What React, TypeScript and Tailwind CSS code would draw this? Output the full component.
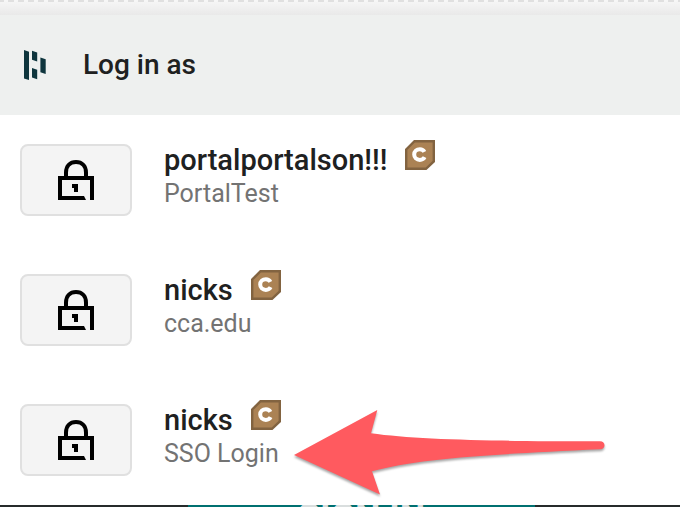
import type { ReactNode } from "react";

type Account = {
  username: string;
  detail: string;
};

const ACCOUNTS: Account[] = [
  { username: "portalportalson!!!", detail: "PortalTest" },
  { username: "nicks", detail: "cca.edu" },
  { username: "nicks", detail: "SSO Login" },
];

function BrandLogo() {
  return (
    <svg viewBox="0 0 24 30" className="h-[30px] w-6" fill="#0e353d" aria-hidden="true">
      <path d="M1 0 6 1.7V30L1 28.4Z" />
      <path d="M9 .7 14.2 2.4V11.5L9 9.8Z" />
      <path d="M9 18 14.2 19.7V29.3L9 27.6Z" />
      <path d="M17.4 7.6 22.7 9.3V24L17.4 22.3Z" />
    </svg>
  );
}

function LockIcon() {
  return (
    <svg viewBox="0 0 36 41" className="h-[41px] w-9" aria-hidden="true">
      <path d="M8 17V12.5C8 6 12 2 18 2S28 6 28 12.5V17" fill="none" stroke="#000" strokeWidth="4" />
      <path d="M0 16H36V40H32V20H4V36H26L28 40H0Z" />
      <path d="M14 24H20V32H16V28H14Z" />
    </svg>
  );
}

function CategoryBadge() {
  return (
    <svg viewBox="0 0 30 30" className="h-[30px] w-[30px] shrink-0" role="img" aria-label="Category C">
      <path d="M9.5 1.2H28.8V21.5L21 28.8H1.2V9.5Z" fill="#ab8254" stroke="#826340" strokeWidth="2.4" />
      <path
        d="M19.4 11.9C18.5 10.2 17 9.3 14.9 9.3C11.5 9.3 9.2 11.5 9.2 14.6S11.5 19.900 14.900 19.900C17.100 19.900 18.700 19 19.600 17.200"
        fill="none"
        stroke="#fff"
        strokeWidth="4"
      />
    </svg>
  );
}

function AccountRow({ account }: { account: Account }) {
  return (
    <li>
      <button type="button" className="flex h-[130px] w-full items-center gap-8 px-5 text-left">
        <span className="flex h-[72px] w-28 shrink-0 items-center justify-center rounded-lg border-2 border-[#e0e0e0] bg-[#f4f4f4]">
          <LockIcon />
        </span>
        <span className="flex flex-col pb-2.5">
          <span className="flex h-[38px] gap-[18px]">
            <span className="pt-1 text-[29px] leading-8 font-medium text-[#1e2121]">{account.username}</span>
            <CategoryBadge />
          </span>
          <span className="text-[25px] leading-8 text-[#737373]">{account.detail}</span>
        </span>
      </button>
    </li>
  );
}

function Panel({ children }: { children: ReactNode }) {
  return (
    <section className="bg-white">
      <header className="flex h-[100px] items-center gap-9 bg-[#eef0ef] px-[23px]">
        <BrandLogo />
        <h1 className="text-[28px] leading-8 font-medium text-[#1e2121]">Log in as</h1>
      </header>
      {children}
    </section>
  );
}

function Arrow() {
  return (
    <svg
      viewBox="0 0 314 90"
      className="pointer-events-none absolute top-[408px] left-[293px] h-[90px] w-[314px] drop-shadow-[0_2px_1px_rgba(0,0,0,0.35)]"
      aria-hidden="true"
    >
      <path
        d="M1 47 84.3 2 78 25.3C125 32 205 33.3 307 33.3C313 33.3 313 41 307 41.3C205 46 125 50 79 63.3L87 86.5Z"
        fill="#ff5a5f"
      />
    </svg>
  );
}

export default function App() {
  return (
    <main className="relative min-h-screen overflow-hidden bg-[#262b2b] font-[Roboto,sans-serif]">
      <div className="h-[15px] bg-linear-to-b from-[#f7f7f7] to-[#e9e9e9]">
        <div className="h-0.5 bg-[repeating-linear-gradient(90deg,#e0e0e0_0_4px,transparent_4px_8px,#e0e0e0_8px_10px)]" />
      </div>
      <Panel>
        <ul>
          {ACCOUNTS.map((account) => (
            <AccountRow key={account.detail} account={account} />
          ))}
        </ul>
      </Panel>
      <Arrow />
      {/* only the top edge of the page's own button shows below the panel */}
      <div className="flex h-0.5 items-start overflow-hidden pr-[145px] pl-[188px]">
        <button type="button" className="flex-1 bg-[#007070] text-4xl leading-6 font-bold text-[#d9dede]">
          SIGN IN
        </button>
      </div>
    </main>
  );
}
